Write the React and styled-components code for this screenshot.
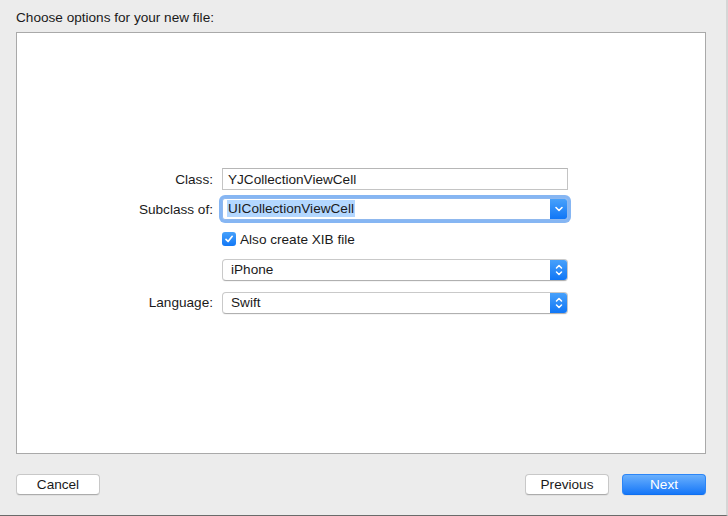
import React from 'react';
import styled, { createGlobalStyle } from 'styled-components';

const GlobalStyle = createGlobalStyle`
  html, body {
    margin: 0;
    padding: 0;
    background: #ececec;
  }
  body {
    font-family: "Liberation Sans", Arial, sans-serif;
    font-size: 13.6px;
    color: #1a1a1a;
  }
`;

const Sheet = styled.div`
  width: 728px;
  height: 516px;
  box-sizing: border-box;
  padding: 10px 20px 0 16px;
  background: #ececec;
  border-right: 2px solid #d6d6d6;
  border-bottom: 1px solid #6a6a6a;
  display: flex;
  flex-direction: column;
`;

const Title = styled.div`
  line-height: 16px;
  height: 16px;
  margin-bottom: 6px;
`;

const Panel = styled.div`
  height: 422px;
  box-sizing: border-box;
  background: #ffffff;
  border: 1px solid #a9a9a9;
  display: flex;
  align-items: center;
`;

const Form = styled.div`
  margin-left: 66px;
  margin-top: -8px;
  display: grid;
  grid-template-columns: 130px 346px;
  column-gap: 9px;
  row-gap: 8px;
  grid-auto-rows: 22px;
  align-items: center;
`;

const Label = styled.div`
  text-align: right;
  margin-top: ${(p) => p.$shift || 0}px;
`;

const Field = styled.div`
  grid-column: 2;
  height: 22px;
  margin-top: ${(p) => p.$shift || 0}px;
  display: flex;
  align-items: center;
`;

const TextBox = styled.div`
  width: 100%;
  height: 22px;
  box-sizing: border-box;
  border: 1px solid #c4c4c4;
  border-top-color: #b6b6b6;
  background: #fff;
  padding-left: 5px;
  display: flex;
  align-items: center;
`;

const Combo = styled.div`
  width: 100%;
  height: 22px;
  box-sizing: border-box;
  border: 1px solid #8fb8ee;
  border-radius: 3px;
  box-shadow: 0 0 0 3px #86b6f3;
  background: #fff;
  display: flex;
  align-items: center;
  padding-left: 4px;
  overflow: hidden;
`;

const Selected = styled.span`
  background: #b3d7ff;
  padding: 1px 1px;
  line-height: 16px;
`;

const Popup = styled.div`
  width: 100%;
  height: 22px;
  box-sizing: border-box;
  border: 1px solid #c9c9c9;
  border-bottom-color: #b0b0b0;
  border-radius: 4px;
  background: #fff;
  display: flex;
  align-items: center;
  padding-left: 8px;
  overflow: hidden;
  box-shadow: 0 1px 0 rgba(0, 0, 0, 0.04);
`;

const Value = styled.span`
  flex: 1;
`;

const Stepper = styled.div`
  width: 18px;
  height: 22px;
  margin-right: -1px;
  background: linear-gradient(#4aa3fb, #0d74f6);
  border-radius: ${(p) => (p.$square ? '0 2px 2px 0' : '0 4px 4px 0')};
  display: flex;
  align-items: center;
  justify-content: center;
`;

const CheckRow = styled.label`
  display: flex;
  align-items: center;
  gap: 4px;
`;

const CheckBox = styled.span`
  width: 14px;
  height: 14px;
  border-radius: 3px;
  background: linear-gradient(#47a1fb, #1278f6);
  display: flex;
  align-items: center;
  justify-content: center;
`;

const Footer = styled.div`
  margin-top: 20px;
  display: flex;
  align-items: center;
  gap: 13px;
`;

const Spacer = styled.div`
  flex: 1;
`;

const Button = styled.button`
  width: 84px;
  height: 21px;
  box-sizing: border-box;
  font-family: "Liberation Sans", Arial, sans-serif;
  font-size: 13.6px;
  padding: 0;
  border-radius: 4px;
  color: ${(p) => (p.$primary ? '#ffffff' : '#1a1a1a')};
  border: 1px solid ${(p) => (p.$primary ? '#2c86f7' : '#c8c8c8')};
  border-bottom-color: ${(p) => (p.$primary ? '#0f6ff0' : '#acacac')};
  background: ${(p) =>
    p.$primary ? 'linear-gradient(#6ab0fd, #1677f8)' : '#ffffff'};
  box-shadow: 0 1px 0 rgba(0, 0, 0, 0.05);
`;

const ChevronDown = () => (
  <svg width="10" height="8" viewBox="0 0 10 8">
    <path d="M2 2.5 L5 5.5 L8 2.5" fill="none" stroke="#fff" strokeWidth="1.6" strokeLinecap="round" strokeLinejoin="round" />
  </svg>
);

const UpDown = () => (
  <svg width="10" height="14" viewBox="0 0 10 14">
    <path d="M2.5 5 L5 2.5 L7.5 5" fill="none" stroke="#fff" strokeWidth="1.5" strokeLinecap="round" strokeLinejoin="round" />
    <path d="M2.5 9 L5 11.5 L7.5 9" fill="none" stroke="#fff" strokeWidth="1.5" strokeLinecap="round" strokeLinejoin="round" />
  </svg>
);

const Check = () => (
  <svg width="10" height="10" viewBox="0 0 10 10">
    <path d="M2 5.3 L4.1 7.5 L8.2 2.3" fill="none" stroke="#fff" strokeWidth="1.7" strokeLinecap="round" strokeLinejoin="round" />
  </svg>
);

const App = () => {
  return (
    <Sheet>
      <GlobalStyle />
      <Title>Choose options for your new file:</Title>
      <Panel>
        <Form>
          <Label>Class:</Label>
          <Field>
            <TextBox>YJCollectionViewCell</TextBox>
          </Field>

          <Label>Subclass of:</Label>
          <Field>
            <Combo>
              <Value>
                <Selected>UICollectionViewCell</Selected>
              </Value>
              <Stepper $square>
                <ChevronDown />
              </Stepper>
            </Combo>
          </Field>

          <Field>
            <CheckRow>
              <CheckBox>
                <Check />
              </CheckBox>
              Also create XIB file
            </CheckRow>
          </Field>

          <Field $shift={1}>
            <Popup>
              <Value>iPhone</Value>
              <Stepper>
                <UpDown />
              </Stepper>
            </Popup>
          </Field>

          <Label $shift={7}>Language:</Label>
          <Field $shift={7}>
            <Popup>
              <Value>Swift</Value>
              <Stepper>
                <UpDown />
              </Stepper>
            </Popup>
          </Field>
        </Form>
      </Panel>
      <Footer>
        <Button>Cancel</Button>
        <Spacer />
        <Button>Previous</Button>
        <Button $primary>Next</Button>
      </Footer>
    </Sheet>
  );
};

export default App;
